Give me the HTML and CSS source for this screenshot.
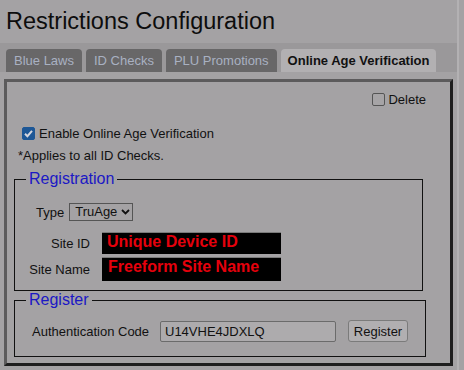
FILE: index.html
```html
<!DOCTYPE html>
<html lang="en">
<head>
    <meta charset="UTF-8">
    <title>Restrictions Configuration</title>
    <link rel="stylesheet" href="styles.css">
</head>
<body>
    <div class="page">
        <h1 class="title">Restrictions Configuration</h1>
        <div class="tabs">
            <div class="tab">Blue Laws</div>
            <div class="tab">ID Checks</div>
            <div class="tab">PLU Promotions</div>
            <div class="tab active">Online Age Verification</div>
        </div>
        <div class="panel">
            <div class="delete-row">
                <label class="check"><input type="checkbox"> Delete</label>
            </div>
            <div class="enable-row">
                <label class="check"><input type="checkbox" checked> Enable Online Age Verification</label>
            </div>
            <div class="note">*Applies to all ID Checks.</div>

            <fieldset class="group reg">
                <legend>Registration</legend>
                <div class="type-row">
                    <span class="type-label">Type</span>
                    <div class="select">
                        <select>
                            <option>TruAge</option>
                        </select>
                        <svg class="chev" width="9" height="6" viewBox="0 0 9 6"><path d="M1 1 L4.5 4.5 L8 1" fill="none" stroke="#111" stroke-width="1.8"/></svg>
                    </div>
                </div>
                <div class="field-row">
                    <span class="lbl">Site ID</span>
                    <div class="redact">Unique Device ID</div>
                </div>
                <div class="field-row name">
                    <span class="lbl">Site Name</span>
                    <div class="redact">Freeform Site Name</div>
                </div>
            </fieldset>

            <fieldset class="group register">
                <legend>Register</legend>
                <div class="auth-row">
                    <span class="auth-label">Authentication Code</span>
                    <input class="code" type="text" value="U14VHE4JDXLQ">
                    <button class="btn">Register</button>
                </div>
            </fieldset>
        </div>
    </div>
</body>
</html>
```

FILE: styles.css
```css
body {
    margin: 0;
    background: #a4a2a4;
    font-family: "Liberation Sans", Arial, sans-serif;
    font-size: 13px;
    color: #111;
}
.page {
    width: 457px;
    height: 370px;
    border-right: 2px solid #b3b1b3;
}
.title {
    margin: 0 0 8px 0;
    padding: 8px 0 0 6px;
    font-size: 23.5px;
    font-weight: normal;
    line-height: 27px;
    color: #0d0d0d;
}
.tabs {
    display: flex;
    gap: 4px;
    height: 23px;
    padding: 6px 0 0 6px;
    background: #9a989a;
}
.tab {
    padding: 0 8px;
    line-height: 23px;
    border-radius: 4px 4px 0 0;
    background: #686768;
    color: #a9b1c2;
}
.tab.active {
    padding: 0 7px;
    background: #b2b0b2;
    color: #111;
    font-weight: bold;
}
.panel {
    margin: 7px 0 0 4px;
    width: 443px;
    height: 281px;
    border: 3px solid;
    border-color: #5c5b5c #1e1e1e #1e1e1e #5c5b5c;
}
.check {
    display: flex;
    align-items: center;
}
.check input {
    appearance: none;
    width: 13px;
    height: 13px;
    margin: 0 3px 0 0;
    border: 1px solid #555;
    border-radius: 2px;
    background: #a6a4a6;
    box-sizing: border-box;
}
.check input:checked {
    border-color: #1d5796;
    background: #1d5796 url("data:image/svg+xml;utf8,<svg xmlns='http://www.w3.org/2000/svg' width='13' height='13' viewBox='0 0 13 13'><path d='M3 6.8 L5.4 9.2 L10 3.8' fill='none' stroke='%23d4d6de' stroke-width='2'/></svg>") no-repeat center;
}
.delete-row {
    display: flex;
    justify-content: flex-end;
    margin-top: 11px;
    height: 13px;
    padding-right: 24px;
}
.enable-row {
    margin-top: 20px;
    height: 13px;
    padding-left: 15px;
}
.enable-row input {
    margin-right: 4px;
}
.note {
    margin-top: 9px;
    padding-left: 11px;
    line-height: 15px;
}
.group {
    margin: 0 0 0 7px;
    padding: 0;
    border: 1px solid #111;
    box-sizing: border-box;
    min-inline-size: 0;
}
.group legend {
    margin-left: 11px;
    padding: 0 3px;
    font-size: 16px;
    line-height: 18px;
    color: #1b18c4;
}
.reg {
    margin-top: 7px;
    width: 409px;
    padding-bottom: 9px;
}
.register {
    width: 412px;
    padding-bottom: 14px;
}
.type-row {
    display: flex;
    align-items: center;
    margin-top: 15px;
    padding-left: 21px;
    height: 18px;
}
.type-label {
    margin-right: 5px;
}
.select {
    position: relative;
    width: 64px;
    height: 18px;
}
.select select {
    appearance: none;
    display: block;
    width: 64px;
    height: 18px;
    margin: 0;
    padding: 0 14px 0 5px;
    box-sizing: border-box;
    border: 1px solid #555;
    border-radius: 0;
    background: #a4a2a4;
    font-family: "Liberation Sans", Arial, sans-serif;
    font-size: 13px;
    line-height: 16px;
    color: #111;
}
.chev {
    position: absolute;
    right: 3px;
    top: 6px;
}
.field-row {
    display: flex;
    align-items: center;
    margin-top: 11px;
}
.field-row.name {
    margin-top: 3px;
}
.lbl {
    width: 75px;
    margin-right: 12px;
    text-align: right;
}
.redact {
    width: 179px;
    height: 22px;
    padding: 0 0 0 5px;
    box-sizing: border-box;
    border-top: 1px solid #7a7a7a;
    background: #000;
    color: #e6000c;
    font-weight: bold;
    font-size: 16px;
    line-height: 17px;
}
.field-row.name .redact {
    height: 24px;
    padding-left: 6px;
}
.auth-row {
    display: flex;
    align-items: center;
    margin-top: 11px;
    padding-left: 17px;
    height: 22px;
}
.auth-label {
    flex-shrink: 0;
    width: 117px;
    margin-right: 11px;
    white-space: nowrap;
}
.code {
    flex-shrink: 0;
    width: 176px;
    height: 21px;
    margin: 0 12px 0 0;
    padding: 0 0 0 4px;
    box-sizing: border-box;
    border: 1px solid #6b6b6b;
    border-radius: 2px;
    background: #adabad;
    font-family: inherit;
    font-size: 13px;
    color: #111;
}
.btn {
    flex-shrink: 0;
    width: 60px;
    height: 22px;
    padding: 0;
    border: 1px solid #7b7b7b;
    border-radius: 3px;
    background: #b1afb1;
    font-family: inherit;
    font-size: 13px;
    color: #111;
}
```
